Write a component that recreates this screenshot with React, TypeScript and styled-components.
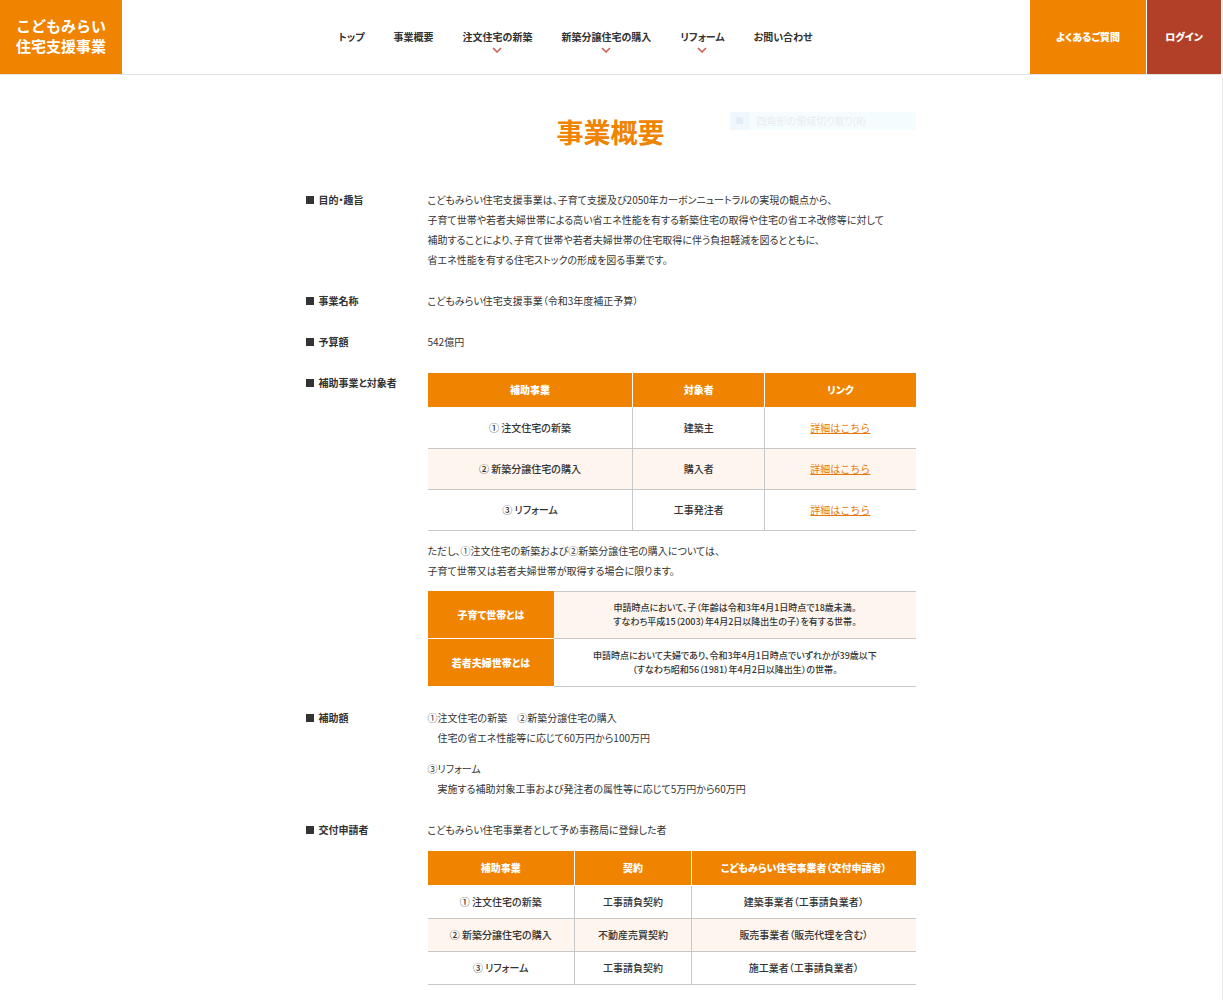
import React from 'react';
import styled, { createGlobalStyle } from 'styled-components';

const color = {
  orange: '#f08300',
  red: '#b24028',
  text: '#333333',
  line: '#c8c8c8',
  tint: '#fdf5ee',
  link: '#e8780c',
};

const GlobalStyle = createGlobalStyle`
  *, *::before, *::after { box-sizing: border-box; }
  body {
    margin: 0;
    background: #ffffff;
    color: ${color.text};
    font-family: "Noto Sans CJK JP", "Noto Sans", sans-serif;
    font-feature-settings: "palt";
    font-size: 10px;
    line-height: 20px;
  }
`;

const Page = styled.div`
  min-height: 100vh;
  padding-right: 1px;
  border-right: 1px solid #ececec;
`;

const Header = styled.header`
  display: flex;
  align-items: stretch;
  height: 75px;
  border-bottom: 1px solid #e2e2e2;
`;

const Logo = styled.a`
  display: flex;
  align-items: center;
  justify-content: center;
  flex: 0 0 122px;
  padding-bottom: 2px;
  background: ${color.orange};
  color: #ffffff;
  font-size: 15px;
  font-weight: 700;
  font-feature-settings: normal;
  text-decoration: none;
`;

const Nav = styled.nav`
  flex: 1;
  display: flex;
  align-items: center;
  justify-content: center;
  gap: 29px;
`;

const NavLink = styled.a`
  position: relative;
  color: ${color.text};
  font-weight: 700;
  text-decoration: none;
  white-space: nowrap;
`;

const Chevron = styled.svg`
  position: absolute;
  top: 20px;
  left: 50%;
  margin-left: -5px;
`;

const HeaderLink = styled.a<{ $fill: string; $width: number }>`
  display: flex;
  align-items: center;
  justify-content: center;
  flex: 0 0 ${(p) => p.$width}px;
  margin-left: 1px;
  background: ${(p) => p.$fill};
  color: #ffffff;
  font-weight: 900;
  text-decoration: none;
`;

const Main = styled.main`
  position: relative;
  width: 100%;
  max-width: 610px;
  margin: 0 auto;
  padding: 37px 0 14px;
`;

const Title = styled.h1`
  margin: 0 0 38px;
  color: ${color.orange};
  font-size: 27px;
  line-height: 40px;
  font-weight: 700;
  text-align: center;
`;

const Ghost = styled.div`
  position: absolute;
  top: 37px;
  right: 0;
  display: flex;
  align-items: center;
  width: 186px;
  height: 18px;
  background: #f5fcfe;
  color: #e8ecf1;
`;

const GhostMark = styled.span`
  width: 20px;
  margin-right: 7px;
  background: #f0f8fe;
  text-align: center;
  line-height: 18px;
  font-size: 8px;
  color: #dfecf6;
`;

const List = styled.dl`
  display: grid;
  gap: 21px;
  margin: 0;
`;

const Row = styled.div`
  display: grid;
  grid-template-columns: 20% 1fr;
`;

const Term = styled.dt`
  display: flex;
  align-items: center;
  gap: 5px;
  height: 20px;
  font-weight: 700;

  &::before {
    content: "";
    width: 8px;
    height: 8px;
    background: ${color.text};
  }
`;

const Detail = styled.dd<{ $gap?: number }>`
  display: grid;
  gap: ${(p) => p.$gap ?? 11}px;
  min-width: 0;
  margin: 0;
`;

const Text = styled.p`
  margin: 0;
`;

const Indent = styled.span`
  display: block;
  padding-left: 10px;
`;

const Table = styled.table`
  width: 100%;
  table-layout: fixed;
  border-collapse: separate;
  border-spacing: 0;
  text-align: center;
`;

const Col = styled.col<{ $share: number }>`
  width: ${(p) => p.$share}%;
`;

const HeadCell = styled.th`
  height: 35px;
  padding: 0;
  background: ${color.orange};
  border-bottom: 1px solid #ffffff;
  color: #ffffff;
  font-weight: 900;

  & + & { border-left: 1px solid #ffffff; }
`;

const BodyRow = styled.tr<{ $height: number }>`
  height: ${(p) => p.$height}px;

  &:nth-child(even) { background: ${color.tint}; }
`;

const Cell = styled.td`
  padding: 0;
  border-bottom: 1px solid ${color.line};
  font-weight: 500;

  & + & { border-left: 1px solid ${color.line}; }
`;

const DetailLink = styled.a`
  color: ${color.link};
  font-weight: 400;
  font-feature-settings: normal;
  text-decoration: underline;
`;

const DefRow = styled.tr`
  height: 48px;
`;

const DefHead = styled.th`
  padding: 0;
  background: ${color.orange};
  border-bottom: 1px solid #ffffff;
  color: #ffffff;
  font-weight: 900;
`;

const DefCell = styled.td<{ $tinted?: boolean }>`
  padding: 0;
  background: ${(p) => (p.$tinted ? color.tint : 'transparent')};
  border-top: ${(p) => (p.$tinted ? `1px solid ${color.line}` : '0')};
  border-bottom: 1px solid ${color.line};
  font-size: 9px;
  font-weight: 500;
  line-height: 14px;
`;

const navItems = [
  { label: 'トップ', menu: false },
  { label: '事業概要', menu: false },
  { label: '注文住宅の新築', menu: true },
  { label: '新築分譲住宅の購入', menu: true },
  { label: 'リフォーム', menu: true },
  { label: 'お問い合わせ', menu: false },
];

type DataTableProps = {
  shares: number[];
  head: string[];
  rows: React.ReactNode[][];
  rowHeight: number;
};

function DataTable({ shares, head, rows, rowHeight }: DataTableProps) {
  return (
    <Table>
      <colgroup>
        {shares.map((s, i) => <Col key={i} $share={s} />)}
      </colgroup>
      <thead>
        <tr>{head.map((h) => <HeadCell key={h} scope="col">{h}</HeadCell>)}</tr>
      </thead>
      <tbody>
        {rows.map((cells, r) => (
          <BodyRow key={r} $height={rowHeight}>
            {cells.map((c, i) => <Cell key={i}>{c}</Cell>)}
          </BodyRow>
        ))}
      </tbody>
    </Table>
  );
}

const more = <DetailLink href="#">詳細はこちら</DetailLink>;

export default function App() {
  return (
    <Page>
      <GlobalStyle />
      <Header>
        <Logo href="#">こどもみらい<br />住宅支援事業</Logo>
        <Nav>
          {navItems.map((item) => (
            <NavLink key={item.label} href="#">
              {item.label}
              {item.menu && (
                <Chevron width="10" height="6" viewBox="0 0 10 6" fill="none" aria-hidden="true">
                  <path d="M1 1 5 5 9 1" stroke="#cc5a4c" strokeWidth="1.5" />
                </Chevron>
              )}
            </NavLink>
          ))}
        </Nav>
        <HeaderLink href="#" $fill={color.orange} $width={116}>よくあるご質問</HeaderLink>
        <HeaderLink href="#" $fill={color.red} $width={74}>ログイン</HeaderLink>
      </Header>

      <Main>
        <Title>事業概要</Title>
        <Ghost><GhostMark>■</GhostMark>四角形の領域切り取り(R)</Ghost>
        <List>
          <Row>
            <Term>目的・趣旨</Term>
            <Detail>
              <Text>
                こどもみらい住宅支援事業は、子育て支援及び2050年カーボンニュートラルの実現の観点から、<br />
                子育て世帯や若者夫婦世帯による高い省エネ性能を有する新築住宅の取得や住宅の省エネ改修等に対して<br />
                補助することにより、子育て世帯や若者夫婦世帯の住宅取得に伴う負担軽減を図るとともに、<br />
                省エネ性能を有する住宅ストックの形成を図る事業です。
              </Text>
            </Detail>
          </Row>
          <Row>
            <Term>事業名称</Term>
            <Detail><Text>こどもみらい住宅支援事業（令和3年度補正予算）</Text></Detail>
          </Row>
          <Row>
            <Term>予算額</Term>
            <Detail><Text>542億円</Text></Detail>
          </Row>
          <Row>
            <Term>補助事業と対象者</Term>
            <Detail $gap={10}>
              <DataTable
                shares={[42, 27, 31]}
                head={['補助事業', '対象者', 'リンク']}
                rowHeight={41}
                rows={[
                  ['① 注文住宅の新築', '建築主', more],
                  ['② 新築分譲住宅の購入', '購入者', more],
                  ['③ リフォーム', '工事発注者', more],
                ]}
              />
              <Text>
                ただし、①注文住宅の新築および②新築分譲住宅の購入については、<br />
                子育て世帯又は若者夫婦世帯が取得する場合に限ります。
              </Text>
              <Table>
                <colgroup>
                  <Col $share={26} />
                  <Col $share={74} />
                </colgroup>
                <tbody>
                  <DefRow>
                    <DefHead scope="row">子育て世帯とは</DefHead>
                    <DefCell $tinted>
                      申請時点において、子（年齢は令和3年4月1日時点で18歳未満。<br />
                      すなわち平成15（2003）年4月2日以降出生の子）を有する世帯。
                    </DefCell>
                  </DefRow>
                  <DefRow>
                    <DefHead scope="row">若者夫婦世帯とは</DefHead>
                    <DefCell>
                      申請時点において夫婦であり、令和3年4月1日時点でいずれかが39歳以下<br />
                      （すなわち昭和56（1981）年4月2日以降出生）の世帯。
                    </DefCell>
                  </DefRow>
                </tbody>
              </Table>
            </Detail>
          </Row>
          <Row>
            <Term>補助額</Term>
            <Detail>
              <Text>
                ①注文住宅の新築　②新築分譲住宅の購入
                <Indent>住宅の省エネ性能等に応じて60万円から100万円</Indent>
              </Text>
              <Text>
                ③リフォーム
                <Indent>実施する補助対象工事および発注者の属性等に応じて5万円から60万円</Indent>
              </Text>
            </Detail>
          </Row>
          <Row>
            <Term>交付申請者</Term>
            <Detail>
              <Text>こどもみらい住宅事業者として予め事務局に登録した者</Text>
              <DataTable
                shares={[30, 24, 46]}
                head={['補助事業', '契約', 'こどもみらい住宅事業者（交付申請者）']}
                rowHeight={33}
                rows={[
                  ['① 注文住宅の新築', '工事請負契約', '建築事業者（工事請負業者）'],
                  ['② 新築分譲住宅の購入', '不動産売買契約', '販売事業者（販売代理を含む）'],
                  ['③ リフォーム', '工事請負契約', '施工業者（工事請負業者）'],
                ]}
              />
            </Detail>
          </Row>
        </List>
      </Main>
    </Page>
  );
}
